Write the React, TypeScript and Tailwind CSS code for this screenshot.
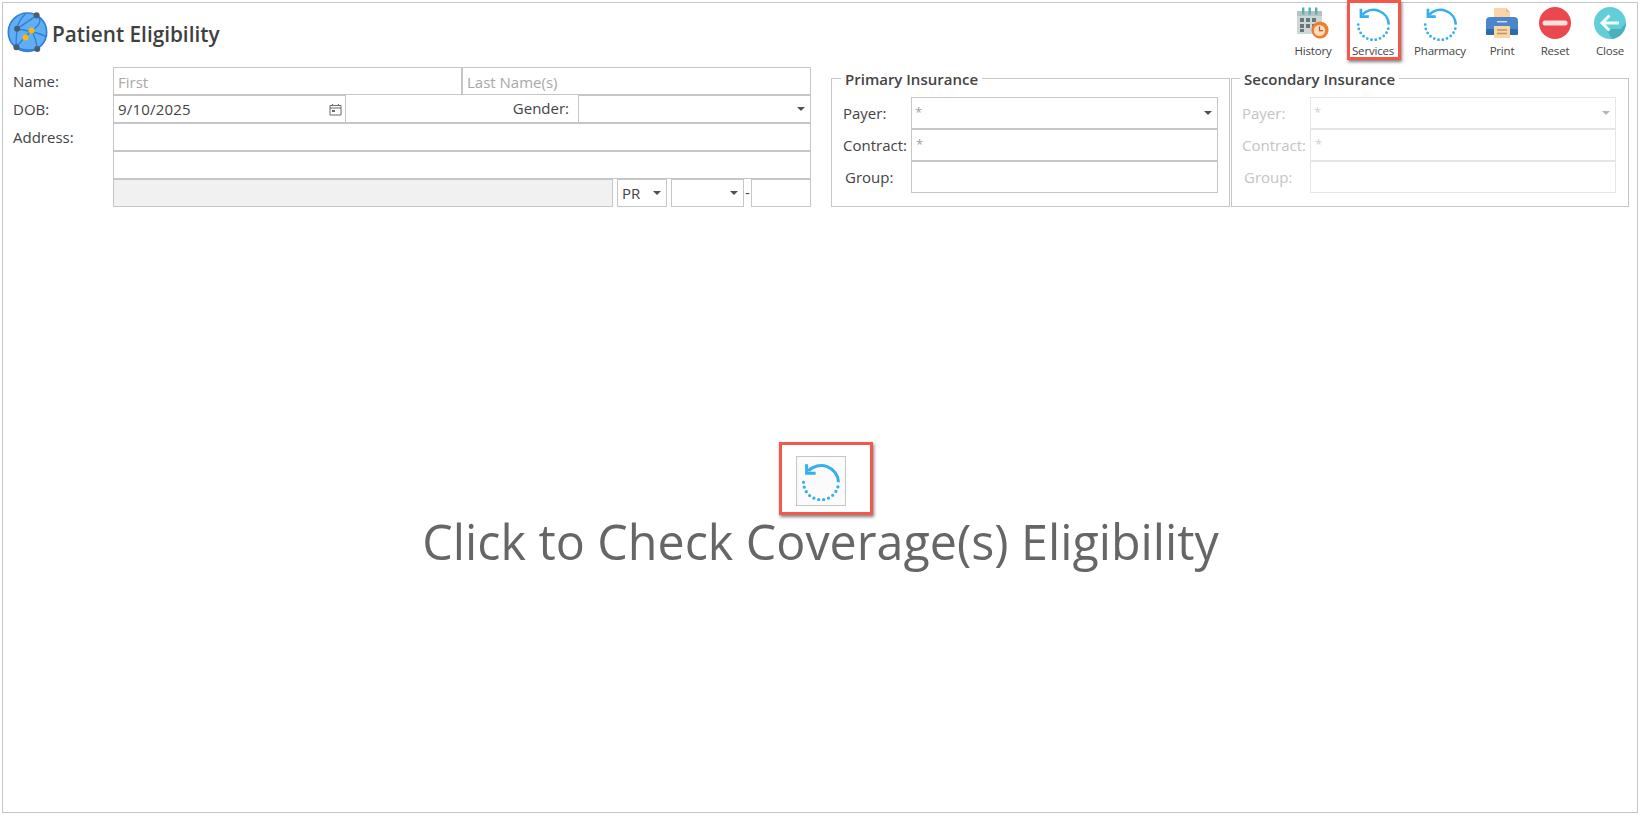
const FONT = "font-['Open_Sans','Noto_Sans',sans-serif]";

function Caret({ muted }: { muted?: boolean }) {
  return (
    <svg width="8" height="4" viewBox="0 0 8 4" className="shrink-0">
      <path d="M0 0h8L4 4z" fill={muted ? "#b5b5b5" : "#505050"} />
    </svg>
  );
}

function RefreshIcon({ size = 35 }: { size?: number }) {
  return (
    <svg width={size} height={size} viewBox="0 0 32 32" fill="none">
      <path d="M5.800 8A14 14 0 0 1 30 17" stroke="#35aef2" strokeWidth="2.400" />
      <path d="M4.500 2.500v7.200h7.200" stroke="#35aef2" strokeWidth="2.400" />
      <path
        d="M29.500 20.700A14 14 0 0 1 2 17"
        stroke="#35aef2"
        strokeWidth="2.600"
        strokeLinecap="round"
        strokeDasharray="0 4"
      />
    </svg>
  );
}

function GlobeIcon() {
  return (
    <svg width="41" height="41" viewBox="20 37 122 122" fill="none">
      <circle cx="81" cy="97" r="57" fill="#62aef5" stroke="#2f7ed8" strokeWidth="5" />
      <g stroke="#2f7ed8" strokeWidth="4">
        <path d="M50 87C75 70 90 60 108 47" />
        <path d="M50 87C70 92 100 92 136 110" />
        <path d="M48 142C60 125 80 105 93 92" />
        <path d="M110 147C108 125 100 105 93 92" />
        <path d="M75 42C62 55 52 70 50 87C48 105 46 125 48 142" />
        <path d="M108 47C125 60 120 75 93 92" />
        <path d="M48 142C70 150 90 152 110 147" />
      </g>
      <circle cx="50" cy="87" r="9" fill="#47606d" />
      <circle cx="108" cy="47" r="9" fill="#47606d" />
      <circle cx="48" cy="142" r="9" fill="#47606d" />
      <circle cx="110" cy="147" r="9" fill="#47606d" />
      <circle cx="93" cy="92" r="9" fill="#fbb806" />
      <circle cx="75" cy="113" r="9" fill="#fbb806" />
    </svg>
  );
}

function HistoryIcon() {
  return (
    <svg width="34" height="32" viewBox="0 0 34 32" fill="none">
      <rect x="1" y="4" width="25" height="23" rx="1.500" fill="#cfd8d8" />
      <rect x="1" y="4" width="25" height="5" fill="#b5c2c2" />
      <rect x="6" y="0.500" width="2.400" height="7" fill="#4fb3b5" />
      <rect x="12.500" y="0.500" width="2.400" height="7" fill="#4fb3b5" />
      <rect x="19" y="0.500" width="2.400" height="7" fill="#4fb3b5" />
      {[4, 10, 16].map((x) =>
        [11, 17].map((y) => <rect key={`${x}-${y}`} x={x} y={y} width="4" height="4" fill="#66787a" />),
      )}
      <rect x="4" y="22" width="4" height="3" fill="#66787a" />
      <circle cx="24" cy="23" r="8.600" fill="#ef7d2c" />
      <circle cx="23.500" cy="23.500" r="5.600" fill="#f7dcc0" />
      <path d="M23.500 19.500v4.200h3.400" stroke="#b3562a" strokeWidth="1.200" />
    </svg>
  );
}

function PrintIcon() {
  return (
    <svg width="34" height="32" viewBox="0 0 34 32" fill="none">
      <path d="M9 1h12l4 4v8H9z" fill="#f9d5a7" />
      <path d="M21 1l4 4h-4z" fill="#e9bd88" />
      <path d="M5 10h24a4 4 0 0 1 4 4v13H1V14a4 4 0 0 1 4-4z" fill="#4a86c8" />
      <rect x="1" y="22" width="32" height="6" rx="1" fill="#2f6aa8" />
      <rect x="12" y="14" width="10" height="1.400" fill="#cfe2f5" />
      <path d="M9 19h16v12H9z" fill="#f9d5a7" />
      <path d="M12 23h10M12 26.500h10" stroke="#c5935c" strokeWidth="1.400" />
    </svg>
  );
}

function ResetIcon() {
  return (
    <svg width="32" height="32" viewBox="0 0 32 32">
      <circle cx="16" cy="16" r="16" fill="#ea474e" />
      <rect x="3.500" y="13.500" width="25" height="5" rx="2.500" fill="#f7e3dc" />
    </svg>
  );
}

function CloseIcon() {
  return (
    <svg width="32" height="32" viewBox="0 0 32 32">
      <circle cx="16" cy="16" r="16" fill="#62ced8" />
      <path d="M9 16l5.500 6H26.500L32 16A16 16 0 0 1 18 32L9 16z" fill="#4cb0bc" />
      <path d="M15.500 8.500L8 16l7.500 7.500M8.500 16H25" stroke="#f4fbfb" strokeWidth="3" fill="none" />
    </svg>
  );
}

function ToolButton({
  label,
  width,
  children,
  highlighted,
}: {
  label: string;
  width: string;
  children: React.ReactNode;
  highlighted?: boolean;
}) {
  return (
    <div className={`relative flex flex-col items-center pt-[4px] ${width}`}>
      <div className="flex h-[32px] items-center justify-center">{children}</div>
      <span className="mt-[4px] text-[11.500px] leading-[16px] tracking-[-0.2px] text-[#444]">{label}</span>
      {highlighted && (
        <div className="absolute left-[5px] top-[-3px] h-[60px] w-[54px] border-[3px] border-[#f4574b] shadow-[1px_2px_3px_rgba(0,0,0,0.5)]" />
      )}
    </div>
  );
}

function FormInput({
  placeholder,
  value,
  className = "",
}: {
  placeholder?: string;
  value?: string;
  className?: string;
}) {
  return (
    <input
      readOnly
      placeholder={placeholder}
      value={value ?? ""}
      className={`h-[28px] min-w-0 border border-[#c6c6c6] px-[4px] pt-px text-[15px] text-[#444] outline-none placeholder:text-[#a8a8a8] ${className}`}
    />
  );
}

function SelectBox({ text, className = "" }: { text?: string; className?: string }) {
  return (
    <div
      className={`flex h-[28px] items-center justify-between border border-[#c6c6c6] pl-[4px] pr-[5px] text-[15px] text-[#444] ${className}`}
    >
      <span>{text}</span>
      <Caret />
    </div>
  );
}

function InsuranceBox({ title, disabled, className = "" }: { title: string; disabled?: boolean; className?: string }) {
  const labelColor = disabled ? "text-[#c4c4c4]" : "text-[#444]";
  const boxBorder = disabled ? "border-[#e6e6e6]" : "border-[#c6c6c6]";
  const starColor = disabled ? "text-[#d0d0d0]" : "text-[#a0a0a0]";
  return (
    <fieldset className={`mt-px h-[139px] border border-[#c6c6c6] ${className}`}>
      <legend className="ml-[-2px] px-[4px] pt-[3px] text-[15px] font-semibold leading-[17px] text-[#444]">
        {title}
      </legend>
      <div className="mt-[9px] flex flex-col">
        <div className="flex h-[32px] items-center">
          <span className={`w-[68px] pt-px text-[15px] ${labelColor}`}>Payer:</span>
          <div className={`flex h-full flex-1 items-center justify-between border ${boxBorder} pl-[3px] pr-[5px] ${starColor}`}>
            <span className="text-[13px]">*</span>
            <Caret muted={disabled} />
          </div>
        </div>
        <div className="flex h-[32px] items-center">
          <span className={`w-[68px] pt-px text-[15px] ${labelColor}`}>Contract:</span>
          <div className={`flex h-full flex-1 items-center border ${boxBorder} px-[4px] ${starColor}`}>
            <span className="text-[13px]">*</span>
          </div>
        </div>
        <div className="flex h-[32px] items-center">
          <span className={`w-[68px] pl-[2px] pt-px text-[15px] ${labelColor}`}>Group:</span>
          <div className={`h-full flex-1 border ${boxBorder}`} />
        </div>
      </div>
    </fieldset>
  );
}

export default function App() {
  return (
    <div className={`h-[816px] w-[1645px] overflow-hidden bg-white pl-[2px] pt-[2px] ${FONT}`}>
      <div className="flex h-[811px] w-[1636px] flex-col border border-[#c6c6c6]">
        {/* title + toolbar */}
        <div className="flex h-[64px] shrink-0 justify-between">
          <div className="flex items-start pl-[4px] pt-[9px]">
            <GlobeIcon />
            <h1 className="ml-[4px] mt-[8px] text-[20.750px] font-semibold leading-[28px] text-[#404040]">
              Patient Eligibility
            </h1>
          </div>
          <div className="mr-[-1px] flex">
            <ToolButton label="History" width="w-[58px]">
              <HistoryIcon />
            </ToolButton>
            <ToolButton label="Services" width="w-[62px]" highlighted>
              <RefreshIcon />
            </ToolButton>
            <ToolButton label="Pharmacy" width="w-[72px]">
              <RefreshIcon />
            </ToolButton>
            <ToolButton label="Print" width="w-[52px]">
              <PrintIcon />
            </ToolButton>
            <ToolButton label="Reset" width="w-[54px]">
              <ResetIcon />
            </ToolButton>
            <ToolButton label="Close" width="w-[56px]">
              <CloseIcon />
            </ToolButton>
          </div>
        </div>

        {/* demographics + insurance */}
        <div className="flex shrink-0 pl-[10px]">
          <div className="flex w-[798px] shrink-0">
            <div className="flex w-[100px] shrink-0 flex-col text-[15px] leading-[29px] text-[#444]">
              <span className="h-[28px]">Name:</span>
              <span className="h-[28px]">DOB:</span>
              <span className="h-[28px]">Address:</span>
            </div>
            <div className="flex w-[698px] flex-col">
              <div className="flex">
                <FormInput placeholder="First" className="w-[349px]" />
                <FormInput placeholder="Last Name(s)" className="w-[349px]" />
              </div>
              <div className="flex">
                <div className="flex h-[28px] w-[233px] items-center justify-between border border-[#c6c6c6] pl-[4px] pr-[3px] text-[15px] tracking-[0.2px] text-[#444]">
                  <span>9/10/2025</span>
                  <svg width="13" height="13" viewBox="0 0 13 13" fill="none" stroke="#6a6a6a">
                    <path d="M1 2.500h11v9.500H1zM1 5h11M3.500 1v2M9.500 1v2" />
                    <rect x="3" y="7" width="3" height="2" fill="#6a6a6a" stroke="none" />
                  </svg>
                </div>
                <div className="flex h-[28px] flex-1 items-center justify-end border-b border-[#c6c6c6] pr-[9px] text-[15px] text-[#444]">
                  Gender:
                </div>
                <SelectBox className="w-[233px]" />
              </div>
              <FormInput className="w-full" />
              <FormInput className="w-full" />
              <div className="flex">
                <div className="h-[28px] w-[500px] border border-[#c6c6c6] bg-[#f1f1f1]" />
                <SelectBox text="PR" className="ml-[4px] w-[50px]" />
                <SelectBox className="ml-[4px] w-[73px]" />
                <span className="w-[7px] text-center text-[14px] leading-[28px] text-[#444]">-</span>
                <FormInput className="w-[60px]" />
              </div>
            </div>
          </div>
          <div className="ml-[20px] flex">
            <InsuranceBox title="Primary Insurance" className="w-[399px] pl-[11px] pr-[11px]" />
            <InsuranceBox title="Secondary Insurance" disabled className="ml-px w-[398px] pl-[10px] pr-[12px]" />
          </div>
        </div>

        {/* empty state */}
        <div className="flex flex-1 flex-col items-center pl-px pt-[249px]">
          <div className="relative flex h-[50px] w-[50px] items-center justify-center border border-[#c6c6c6] bg-[#fbfbfb]">
            <RefreshIcon size={40} />
            <div className="absolute left-[-18px] top-[-15px] h-[73px] w-[94px] border-[3px] border-[#f4574b] shadow-[1px_2px_3px_rgba(0,0,0,0.5)]" />
          </div>
          <p className="mt-[3px] text-[48.400px] leading-[64px] text-[#666]">Click to Check Coverage(s) Eligibility</p>
        </div>
      </div>
    </div>
  );
}
